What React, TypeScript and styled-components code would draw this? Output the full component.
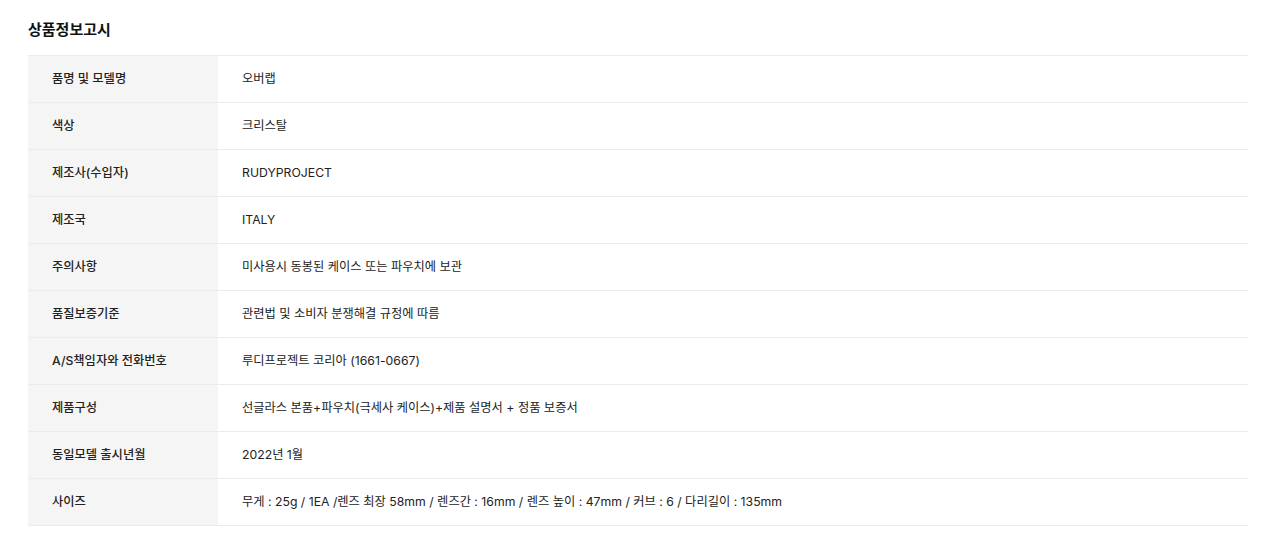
import React from "react";
import styled, { createGlobalStyle } from "styled-components";

const Global = createGlobalStyle`
  html, body { margin: 0; padding: 0; background: #fff; }
  body { font-family: Inter, "Noto Sans CJK KR", sans-serif; color: #222; -webkit-font-smoothing: antialiased; }
`;

const Page = styled.section`
  padding: 20px 24px 0 28px;
`;

const Title = styled.h2`
  margin: 0;
  font-size: 15px;
  font-weight: 700;
  line-height: 20px;
  color: #111;
  padding-bottom: 15px;
`;

const Table = styled.div`
  border-top: 1px solid #ebebeb;
`;

const Row = styled.div`
  display: grid;
  grid-template-columns: 190px 1fr;
  border-bottom: 1px solid #ebebeb;
  height: 46px;
`;

const Label = styled.div`
  background: #f5f5f5;
  display: flex;
  align-items: center;
  padding: 0 0 2px 24px;
  font-size: 12.25px;
  font-weight: 500;
  color: #222;
`;

const Value = styled.div`
  display: flex;
  align-items: center;
  padding: 0 0 2px 24px;
  font-size: 12.25px;
  font-weight: 400;
  color: #222;
`;

const rows: [string, string][] = [
  ["품명 및 모델명", "오버랩"],
  ["색상", "크리스탈"],
  ["제조사(수입자)", "RUDYPROJECT"],
  ["제조국", "ITALY"],
  ["주의사항", "미사용시 동봉된 케이스 또는 파우치에 보관"],
  ["품질보증기준", "관련법 및 소비자 분쟁해결 규정에 따름"],
  ["A/S책임자와 전화번호", "루디프로젝트 코리아 (1661-0667)"],
  ["제품구성", "선글라스 본품+파우치(극세사 케이스)+제품 설명서 + 정품 보증서"],
  ["동일모델 출시년월", "2022년 1월"],
  ["사이즈", "무게 : 25g / 1EA /렌즈 최장 58mm / 렌즈간 : 16mm / 렌즈 높이 : 47mm / 커브 : 6 / 다리길이 : 135mm"],
];

export default function App() {
  return (
    <>
      <Global />
      <Page>
        <Title>상품정보고시</Title>
        <Table>
          {rows.map(([k, v]) => (
            <Row key={k}>
              <Label>{k}</Label>
              <Value>{v}</Value>
            </Row>
          ))}
        </Table>
      </Page>
    </>
  );
}
